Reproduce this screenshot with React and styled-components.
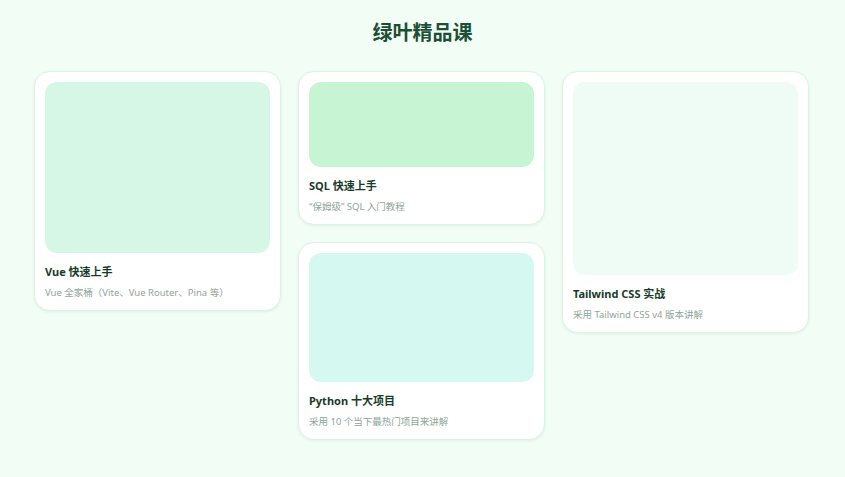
import React from "react";
import styled, { createGlobalStyle } from "styled-components";

const GlobalStyle = createGlobalStyle`
  html, body { margin: 0; padding: 0; }
  body {
    background: #f1fdf5;
    font-family: "Noto Sans", "Noto Sans CJK SC", sans-serif;
  }
`;

const Page = styled.main`
  min-height: 477px;
  padding-top: 18px;
  box-sizing: border-box;
`;

const Heading = styled.h1`
  margin: 0 0 25px;
  text-align: center;
  font-size: 20px;
  line-height: 28px;
  font-weight: 700;
  color: #1d4f36;
  font-family: "Noto Sans CJK SC", sans-serif;
`;

const Grid = styled.div`
  width: 775px;
  margin: 0 auto;
  display: flex;
  gap: 17px;
  align-items: flex-start;
  transform: translateX(-1px);
`;

const Column = styled.div`
  width: 247px;
  display: flex;
  flex-direction: column;
  gap: 17px;
`;

const Card = styled.article`
  background: #ffffff;
  border: 1px solid #dcf4e4;
  border-radius: 16px;
  padding: 10px 10px 10px;
  box-shadow: 0 1px 3px rgba(22, 101, 52, 0.08);
`;

const Cover = styled.div`
  height: ${(p) => p.$h}px;
  border-radius: 12px;
  background: ${(p) => p.$bg};
`;

const Title = styled.h2`
  margin: 11px 0 0;
  font-size: 11px;
  line-height: 16px;
  font-weight: 700;
  color: #173b2a;
`;

const Sub = styled.p`
  margin: 6px 0 0;
  font-size: 9.5px;
  line-height: 14px;
  color: #8ea598;
`;

const CourseCard = ({ h, bg, title, sub }) => (
  <Card>
    <Cover $h={h} $bg={bg} />
    <Title>{title}</Title>
    <Sub>{sub}</Sub>
  </Card>
);

export default function App() {
  return (
    <>
      <GlobalStyle />
      <Page>
        <Heading>绿叶精品课</Heading>
        <Grid>
          <Column>
            <CourseCard
              h={171}
              bg="#d6f7e5"
              title="Vue 快速上手"
              sub="Vue 全家桶（Vite、Vue Router、Pina 等）"
            />
          </Column>
          <Column>
            <CourseCard
              h={85}
              bg="#c7f5d3"
              title="SQL 快速上手"
              sub="“保姆级” SQL 入门教程"
            />
            <CourseCard
              h={129}
              bg="#d5f9f0"
              title="Python 十大项目"
              sub="采用 10 个当下最热门项目来讲解"
            />
          </Column>
          <Column>
            <CourseCard
              h={193}
              bg="#eefcf5"
              title="Tailwind CSS 实战"
              sub="采用 Tailwind CSS v4 版本讲解"
            />
          </Column>
        </Grid>
      </Page>
    </>
  );
}
